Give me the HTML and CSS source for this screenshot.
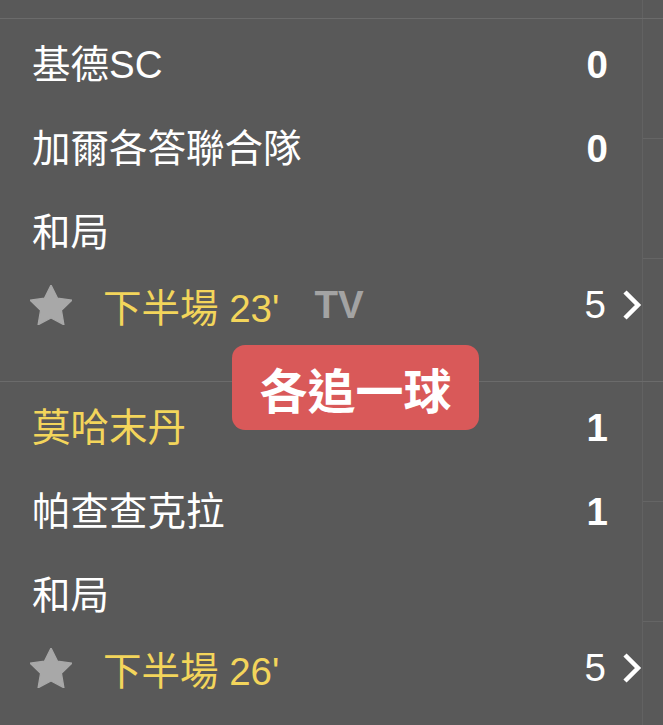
FILE: index.html
```html
<!DOCTYPE html>
<html lang="zh-Hant">
<head>
    <meta charset="UTF-8">
    <meta name="viewport" content="width=device-width, initial-scale=1.0">
    <title>即時比分</title>
    <link rel="stylesheet" href="styles.css">
</head>
<body>
    <div class="screen">
        <div class="tail">
            <div class="tail-main"></div>
            <div class="side"></div>
        </div>

        <div class="match">
            <div class="match-main">
                <div class="row">
                    <span class="team">基德SC</span>
                    <span class="score">0</span>
                </div>
                <div class="row">
                    <span class="team">加爾各答聯合隊</span>
                    <span class="score">0</span>
                </div>
                <div class="row">
                    <span class="team">和局</span>
                </div>
                <div class="footer">
                    <svg class="star" viewBox="2 2 20 19.1" width="42" height="40">
                        <path d="M12 2l3.09 6.26L22 9.27l-5 4.87 1.18 6.88L12 17.77l-6.18 3.25L7 14.14 2 9.27l6.91-1.01L12 2z" stroke="#a8a8a8" stroke-width="0.6" stroke-linejoin="round"/>
                    </svg>
                    <span class="status">下半場 23'</span>
                    <span class="tv">TV</span>
                    <span class="count">5</span>
                    <svg class="chevron" viewBox="0 0 20 30" width="20" height="30">
                        <polyline points="3,2 16,15 3,28" fill="none" stroke="#fff" stroke-width="4.5"/>
                    </svg>
                </div>
            </div>
            <div class="side">
                <div class="side-cell"></div>
                <div class="side-cell"></div>
            </div>
        </div>

        <div class="match">
            <div class="match-main">
                <div class="row">
                    <span class="team lead">莫哈末丹</span>
                    <span class="score">1</span>
                </div>
                <div class="row">
                    <span class="team">帕查查克拉</span>
                    <span class="score">1</span>
                </div>
                <div class="row">
                    <span class="team">和局</span>
                </div>
                <div class="footer">
                    <svg class="star" viewBox="2 2 20 19.1" width="42" height="40">
                        <path d="M12 2l3.09 6.26L22 9.27l-5 4.87 1.18 6.88L12 17.77l-6.18 3.25L7 14.14 2 9.27l6.91-1.01L12 2z" stroke="#a8a8a8" stroke-width="0.6" stroke-linejoin="round"/>
                    </svg>
                    <span class="status">下半場 26'</span>
                    <span class="count">5</span>
                    <svg class="chevron" viewBox="0 0 20 30" width="20" height="30">
                        <polyline points="3,2 16,15 3,28" fill="none" stroke="#fff" stroke-width="4.5"/>
                    </svg>
                </div>
            </div>
            <div class="side">
                <div class="side-cell"></div>
                <div class="side-cell"></div>
            </div>
        </div>

        <div class="toast">各追一球</div>
    </div>
</body>
</html>
```

FILE: styles.css
```css
body {
    margin: 0;
    background-color: #595959;
    font-family: "Liberation Sans", "Noto Sans CJK TC", sans-serif;
    color: #ffffff;
}
.screen {
    position: relative;
    width: 663px;
    height: 725px;
    overflow: hidden;
}
.tail {
    display: flex;
    height: 18px;
}
.tail-main {
    width: 642px;
}
.match {
    display: flex;
    height: 363px;
    box-sizing: border-box;
    border-top: 1px solid #6b6b6b;
}
.match-main {
    width: 642px;
    padding-top: 4px;
    box-sizing: border-box;
}
.side {
    flex: 1;
    border-left: 1px solid #626262;
}
.side-cell {
    height: 119px;
    border-bottom: 1px solid #656565;
}
.row {
    display: flex;
    justify-content: space-between;
    align-items: center;
    height: 84px;
    padding: 0 34px 0 32px;
    font-size: 38.5px;
    line-height: 84px;
}
.team.lead {
    color: #f3d55b;
}
.score {
    font-weight: bold;
}
.footer {
    display: flex;
    align-items: center;
    height: 60px;
    padding: 0 0 0 30px;
    font-size: 38.5px;
}
.star {
    fill: #a8a8a8;
    flex-shrink: 0;
}
.status {
    margin-left: 31px;
    color: #f3d55b;
}
.tv {
    margin-left: 35px;
    color: #a3a3a3;
    font-weight: bold;
}
.count {
    margin-left: auto;
}
.chevron {
    margin-left: 16px;
}
.toast {
    position: absolute;
    left: 232px;
    top: 345px;
    width: 247px;
    height: 85px;
    box-sizing: border-box;
    display: flex;
    align-items: center;
    justify-content: center;
    background-color: #d95959;
    border-radius: 13px;
    font-size: 48px;
    font-weight: bold;
    color: #ffffff;
}
```
